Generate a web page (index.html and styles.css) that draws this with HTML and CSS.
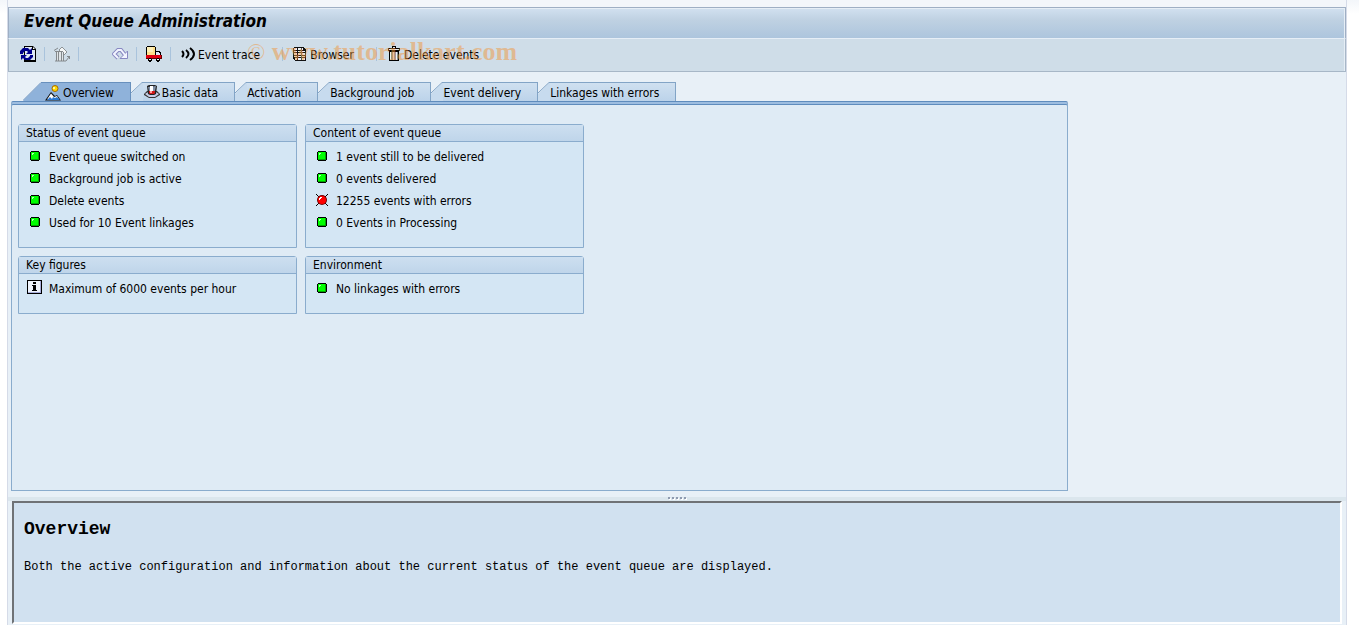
FILE: index.html
```html
<!DOCTYPE html>
<html lang="en">
<head>
  <meta charset="UTF-8" />
  <meta name="viewport" content="width=device-width, initial-scale=1.0"/>
  <title>Event Queue Administration</title>
  <link rel="stylesheet" href="styles.css">
</head>
<body>
  <!-- shared status icons -->
  <svg class="sprite" aria-hidden="true">
    <symbol id="led-green" viewBox="0 0 16 16">
      <path d="M4 3h8v1h1v8h-1v1H4v-1H3V4h1z" fill="#000"/>
      <path d="M4 4h8v8H4z" fill="#00a800"/>
      <path d="M4 4h7v7H4z" fill="#00ff00"/>
      <path d="M5 5h2v1H6v1H5z" fill="#b0ffb0"/>
    </symbol>
    <symbol id="led-red" viewBox="0 0 16 16">
      <path d="M2 2l12 12M14 2L2 14" stroke="#000" fill="none"/>
      <circle cx="8" cy="8" r="5" fill="#700"/>
      <circle cx="8" cy="8" r="4" fill="#f00"/>
      <path d="M6 5h2v1H7v1H6v1H5V6h1z" fill="#fff"/>
    </symbol>
    <symbol id="slope" viewBox="0 0 12 19">
      <path d="M0 19V12L11 1h1v18z" fill="#c7dbee"/>
      <path d="M0 11L11 0.5h1" fill="none" stroke="#82a4c6"/>
    </symbol>
  </svg>

  <div class="window">
    <header class="title-bar">
      <h1>Event Queue Administration</h1>
    </header>

    <div class="toolbar" role="toolbar" aria-label="Application toolbar">
      <button type="button" class="tool" aria-label="Refresh">
        <svg class="icon" viewBox="0 0 16 16">
          <path d="M4 0h9l3 3v13H4z" fill="#000"/>
          <path d="M5 1h7v3h3v10H5z" fill="#dfe8f4"/>
          <path d="M13 1l2 2h-2z" fill="#fff"/>
          <path d="M0 8V5l3-3h5l2 2 2-2v6H6l2-2-1-1H5L3 7v1z" fill="#00008c"/>
          <path d="M13 9v2l-3 3H5l-2-2-2 2V9h6l-2 2 1 1h2l2-2V9z" fill="#00008c"/>
        </svg>
      </button>
      <span class="sep"></span>
      <button type="button" class="tool" aria-label="Archive" disabled>
        <svg class="icon" viewBox="0 0 16 16">
          <path d="M8 1l5 5-3 3-5-5z" fill="#f4f6f6" stroke="#8d9396"/>
          <path d="M1 5h8v1H1z" fill="#84898c"/>
          <path d="M2 6h8v9H2z" fill="#e0e5e8"/>
          <path d="M1 15h11M2.5 6v9M4.5 6v9M7.5 6v9M9.5 6v9M0 4.5L4 2" stroke="#84898c" fill="none"/>
          <path d="M12 15l3-4M13 10.5h3M15.5 10v3" stroke="#84898c" fill="none"/>
        </svg>
      </button>
      <span class="sep"></span>
      <button type="button" class="tool tool-redo" aria-label="Redo" disabled>
        <svg class="icon" viewBox="0 0 16 16">
          <path d="M6 12L2 8l4-4h3l4 5" fill="none" stroke="#8888c2" stroke-width="4"/>
          <path d="M8 12.5h7.5V5z" fill="#f2f4ff" stroke="#8888c2"/>
          <path d="M6 12L2 8l4-4h3l4 5" fill="none" stroke="#f2f4ff" stroke-width="2"/>
        </svg>
      </button>
      <span class="sep"></span>
      <button type="button" class="tool" aria-label="Transport">
        <svg class="icon" viewBox="0 0 16 16" shape-rendering="crispEdges">
          <path d="M1 0h8v1h1v9H0V1h1z" fill="#000"/>
          <path d="M1 1h8v8H1z" fill="#ffe08a"/>
          <path d="M1 1h6v5H1z" fill="#fff0b8"/>
          <path d="M10 5h4v1h1v3h1v3h-6z" fill="#000"/>
          <path d="M10 6h3v1h1v2h-4z" fill="#dfeaf8"/>
          <path d="M0 9h16v4H0z" fill="#600"/>
          <path d="M0 9h15v3H0z" fill="#e00010"/>
          <path d="M3 12h2v1h1v2H5v1H3v-1H2v-2h1zM11 12h2v1h1v2h-1v1h-2v-1h-1v-2h1z" fill="#000"/>
          <path d="M3 13h2v1H3zM11 13h2v1h-2z" fill="#fff"/>
        </svg>
      </button>
      <span class="sep"></span>
      <button type="button" class="tool">
        <svg class="icon" viewBox="0 0 16 16">
          <path d="M2 5q3 3 0 6M6 4q5 4 0 8M10 2q8 6 0 12" fill="none" stroke="#000" stroke-width="2"/>
        </svg>
        <span>Event trace</span>
      </button>
      <span class="sep sep-text"></span>
      <button type="button" class="tool">
        <svg class="icon" viewBox="0 0 16 16" shape-rendering="crispEdges">
          <path d="M2 1h10v1h1v1h1v12H3v-1H2v-1H1V2h1z" fill="#111"/>
          <path d="M2 2h3v2H2zM6 2h5v2H6zM2 5h3v1H2zM6 5h7v1H6zM2 7h3v2H2zM6 7h7v2H6zM2 10h3v1H2zM6 10h7v1H6zM3 12h2v2H3zM6 12h7v2H6z" fill="#eef3f8"/>
          <path d="M9 2h1v12H9z" fill="#555"/>
        </svg>
        <span>Browser</span>
      </button>
      <span class="sep sep-text"></span>
      <button type="button" class="tool">
        <svg class="icon" viewBox="0 0 16 16" shape-rendering="crispEdges">
          <path d="M6 0h4v2h4v3h-1v10H3V5H2V2h4z" fill="#000"/>
          <path d="M7 1h2v1H7zM3 3h10v1H3z" fill="#e4e8ec"/>
          <path d="M4 6h8v8H4z" fill="#8b939c"/>
          <path d="M4 6h1v8H4zM7 6h1v8H7zM10 6h1v8h-1z" fill="#f0f3f6"/>
        </svg>
        <span>Delete events</span>
      </button>
      <div class="watermark" aria-hidden="true"><span class="mark">©</span> www.tutorialkart.com</div>
    </div>

    <main class="workspace">
      <div class="tabs" role="tablist">
        <button type="button" class="tab active" role="tab" aria-selected="true">
          <svg class="edge edge-active" viewBox="0 0 19 19">
            <path d="M0 19L18 1h1v18z" fill="#8fb2da"/>
            <path d="M0 18.5L18 0.5h1" fill="none" stroke="#6890bd"/>
          </svg>
          <span class="tab-body">
            <svg class="icon" viewBox="0 0 16 16">
              <circle cx="10" cy="3.5" r="3" fill="#ffd900" stroke="#a86b00"/>
              <path d="M8 2h2v2H8z" fill="#fff6a0"/>
              <path d="M0 15.5h16L12 10l-2 1-4-4z" fill="#111"/>
              <path d="M2 14.5L6 8.5l3 3.5 3-1 2 3.5z" fill="#fff"/>
              <path d="M2 15l3-3 2 2 1-2 2 1 2-1 3 3z" fill="#2a78d0"/>
            </svg>
            Overview
          </span>
        </button>
        <button type="button" class="tab" role="tab" aria-selected="false">
          <svg class="edge"><use href="#slope"/></svg>
          <span class="tab-body with-icon">
            <svg class="icon" viewBox="0 0 16 16">
              <path d="M0 9l3-3h10l3 3v1l-5 3H5l-5-3z" fill="#333"/>
              <path d="M1 9l3-2h8l3 2-4 3H5z" fill="#c6cce6"/>
              <path d="M3 1l2-1h6l2 1-1 8-2 1H6L4 9z" fill="#222"/>
              <path d="M4 2l8-1-1 5H5z" fill="#7f8fa6"/>
              <path d="M6 1h3v5H6z" fill="#fff"/>
              <path d="M5 6h6v2l-1 1H6L5 8z" fill="#d01818"/>
              <path d="M6 6h2v2H6z" fill="#ff9a9a"/>
            </svg>
            Basic data
          </span>
        </button>
        <button type="button" class="tab" role="tab" aria-selected="false">
          <svg class="edge"><use href="#slope"/></svg>
          <span class="tab-body">Activation</span>
        </button>
        <button type="button" class="tab" role="tab" aria-selected="false">
          <svg class="edge"><use href="#slope"/></svg>
          <span class="tab-body">Background job</span>
        </button>
        <button type="button" class="tab" role="tab" aria-selected="false">
          <svg class="edge"><use href="#slope"/></svg>
          <span class="tab-body">Event delivery</span>
        </button>
        <button type="button" class="tab" role="tab" aria-selected="false">
          <svg class="edge"><use href="#slope"/></svg>
          <span class="tab-body">Linkages with errors</span>
        </button>
      </div>

      <div class="tab-panel" role="tabpanel">
        <div class="groups">
          <section class="group">
            <h2>Status of event queue</h2>
            <ul>
              <li><svg class="icon"><use href="#led-green"/></svg>Event queue switched on</li>
              <li><svg class="icon"><use href="#led-green"/></svg>Background job is active</li>
              <li><svg class="icon"><use href="#led-green"/></svg>Delete events</li>
              <li><svg class="icon"><use href="#led-green"/></svg>Used for 10 Event linkages</li>
            </ul>
          </section>
          <section class="group">
            <h2>Content of event queue</h2>
            <ul>
              <li><svg class="icon"><use href="#led-green"/></svg>1 event still to be delivered</li>
              <li><svg class="icon"><use href="#led-green"/></svg>0 events delivered</li>
              <li><svg class="icon"><use href="#led-red"/></svg>12255 events with errors</li>
              <li><svg class="icon"><use href="#led-green"/></svg>0 Events in Processing</li>
            </ul>
          </section>
          <section class="group">
            <h2>Key figures</h2>
            <ul>
              <li>
                <svg class="icon" viewBox="0 0 16 16" shape-rendering="crispEdges">
                  <path d="M0 0h15v14H0z" fill="#000"/>
                  <path d="M1 1h13v12H1z" fill="#a9aedb"/>
                  <path d="M1 1h12v11H1z" fill="#eef3fb"/>
                  <path d="M6 2h3v2H6zM5 5h4v5h1v1H5v-1h1V6H5z" fill="#000"/>
                </svg>
                Maximum of 6000 events per hour
              </li>
            </ul>
          </section>
          <section class="group">
            <h2>Environment</h2>
            <ul>
              <li><svg class="icon"><use href="#led-green"/></svg>No linkages with errors</li>
            </ul>
          </section>
        </div>
      </div>
    </main>

    <div class="splitter"><i></i><i></i><i></i><i></i><i></i></div>

    <section class="details">
      <h2>Overview</h2>
      <p>Both the active configuration and information about the current status of the event queue are displayed.</p>
    </section>
  </div>
</body>
</html>
```
FILE: styles.css
```css
:root {
  --line: #8aaccd;
  --line-strong: #5f8cbd;
  --window: #e8f0f7;
  --panel: #dfebf5;
  --group: #d4e6f4;
}

* {
  box-sizing: border-box;
}

body {
  margin: 0;
  background: linear-gradient(#f3f6fa, #ffffff 14px);
  font-family: "DejaVu Sans Condensed", Tahoma, "Noto Sans", sans-serif;
  font-size: 12px;
  color: #000;
}

h1, h2, p, ul {
  margin: 0;
  padding: 0;
}

button {
  font: inherit;
  color: inherit;
  background: none;
  border: none;
  padding: 0;
}

.sprite {
  position: absolute;
  width: 0;
  height: 0;
}

.icon {
  width: 16px;
  height: 16px;
  flex: none;
}

.window {
  display: flex;
  flex-direction: column;
  height: 100vh;
  min-height: 500px;
  padding-top: 7px;
  margin: 0 12px 0 7px;
  border: solid #d5dbe8;
  border-width: 0 1px;
  background: linear-gradient(#f3f6fa 7px, var(--window) 7px);
}

/* Title and toolbar */
.title-bar {
  height: 31px;
  padding: 0 15px;
  border: 1px solid #9fafc4;
  border-bottom: none;
  box-shadow: inset 0 1px #e6eef6, inset -1px 0 #e6eef6;
  background: linear-gradient(#d2e1f0, #bfd1e2 40%, #adc5dd);
}

.title-bar h1 {
  font-size: 17px;
  line-height: 27px;
  font-style: italic;
  font-weight: bold;
}

.toolbar {
  position: relative;
  display: flex;
  align-items: center;
  height: 34px;
  padding: 0 0 2px 11px;
  border: 1px solid #a7b7c7;
  border-top-color: #e6eef6;
  box-shadow: inset -1px 0 #e6eef6;
  background: #cfdde8;
}

.tool {
  display: flex;
  align-items: center;
  gap: 2px;
}

.tool span {
  padding-top: 2px;
}

.tool-redo {
  margin-left: 24px;
}

.sep {
  width: 2px;
  height: 14px;
  margin: 0 8px;
  border-left: 1px solid #a9c3dc;
}

.sep-text {
  margin-left: 22px;
}

.watermark {
  position: absolute;
  left: 238px;
  top: -2px;
  font: bold 26px/30px "Liberation Serif", serif;
  color: rgba(240, 150, 60, 0.5);
  white-space: nowrap;
  pointer-events: none;
}

.mark {
  font-size: 24px;
  font-weight: normal;
}

/* Tabs */
.workspace {
  flex: 1;
  display: flex;
  flex-direction: column;
  width: 79%;
  margin-left: 3px;
  padding: 10px 0 6px;
}

.tabs {
  display: flex;
  padding-left: 12px;
}

.tab {
  display: flex;
  height: 19px;
}

.edge {
  width: 12px;
  height: 19px;
}

.edge-active {
  width: 19px;
}

.tab-body {
  display: flex;
  align-items: center;
  gap: 2px;
  height: 19px;
  padding-top: 2px;
  padding-right: 16px;
  border-top: 1px solid #82a4c6;
  border-right: 1px solid #82a4c6;
  background: linear-gradient(#cfe0f0, #bcd3ea);
}

.tab-body.with-icon {
  padding-left: 1px;
}

.tab.active .tab-body {
  padding-left: 3px;
  border-color: #6890bd;
  background: #8fb2da;
}

.tab-panel {
  flex: 1;
  padding: 20px 6px;
  border: 1px solid var(--line);
  border-top: 1px solid var(--line-strong);
  border-radius: 2px 2px 0 0;
  box-shadow: inset 0 2px #9dbde0, inset 0 3px var(--line-strong);
  background: var(--panel);
}

.groups {
  display: grid;
  grid-template-columns: repeat(2, minmax(0, 279px));
  gap: 8px;
  margin-top: 2px;
}

.group {
  border: 1px solid var(--line);
  border-radius: 3px 3px 0 0;
  background: var(--group);
}

.group h2 {
  height: 17px;
  padding-left: 7px;
  border-bottom: 1px solid var(--line);
  background: linear-gradient(#cddff0, #bfd5ea);
  font-size: 12px;
  line-height: 16px;
  font-weight: normal;
}

.group ul {
  padding: 4px 8px 13px;
  list-style: none;
}

.group li {
  display: flex;
  align-items: center;
  gap: 6px;
  height: 22px;
}

.group .icon {
  margin-bottom: 2px;
}

/* Documentation pane */
.splitter {
  display: flex;
  justify-content: center;
  gap: 2px;
  height: 4px;
  background: #dbe6ed;
}

.splitter i {
  width: 2px;
  height: 2px;
  background: #8f9bb0;
  box-shadow: 1px 1px #fff;
}

.details {
  flex: 0 0 123px;
  margin: 0 4px 1px;
  padding: 16px 10px;
  border: 2px solid;
  border-color: #6f7276 #fff #fff #6f7276;
  background: #d1e1f0;
  font-family: "Liberation Mono", "Courier New", monospace;
}

.details h2 {
  font-size: 18px;
  line-height: 20px;
}

.details p {
  margin-top: 18px;
  font-size: 12px;
  line-height: 20px;
}
```
